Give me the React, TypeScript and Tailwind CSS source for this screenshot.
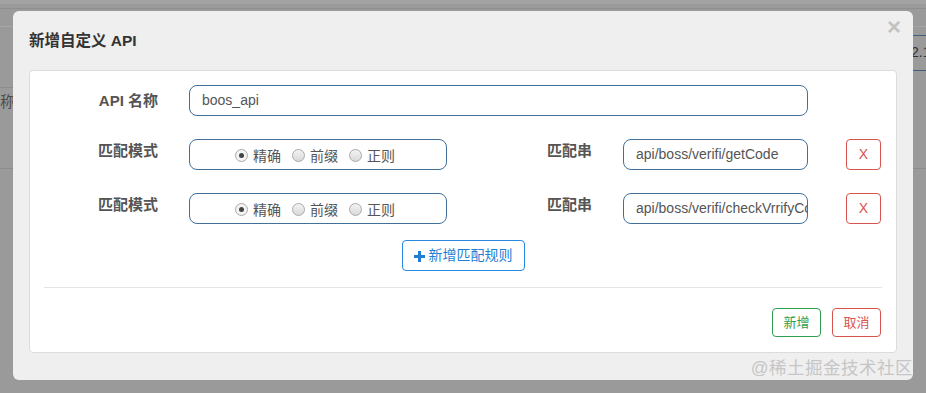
import React from 'react';

const font = "font-['Liberation_Sans','Noto_Sans_CJK_SC',sans-serif]";

function Radio({ checked, label }: { checked?: boolean; label: string }) {
  return (
    <label className="flex items-center">
      <span
        className={
          'flex h-[13px] w-[13px] items-center justify-center rounded-full border border-[#a9a9a9] ' +
          (checked ? 'bg-[#f4f4f4]' : 'bg-gradient-to-b from-[#f3f3f3] to-[#d9d9d9]')
        }
      >
        {checked && <span className="h-[5px] w-[5px] rounded-full bg-[#444]" />}
      </span>
      <span className="ml-[5px] text-[14px] leading-5 text-[#555]">{label}</span>
    </label>
  );
}

function RuleRow({ value }: { value: string }) {
  return (
    <div className="flex items-start">
      <div className="w-[114px] pt-[2px] text-right text-[15px] font-bold leading-5 text-[#555]">匹配模式</div>
      <div className="ml-[31px] flex h-[31px] w-[258px] items-center justify-center gap-[11px] rounded-[8px] border border-[#41709b] pt-[2px] pr-[6px]">
        <Radio checked label="精确" />
        <Radio label="前缀" />
        <Radio label="正则" />
      </div>
      <div className="ml-[100px] w-[45px] pt-[2px] text-[15px] font-bold leading-5 text-[#555]">匹配串</div>
      <div className="ml-[31px] flex h-[31px] w-[185px] items-center overflow-hidden whitespace-nowrap rounded-[8px] border border-[#41709b] pl-[12px] text-[14px] text-[#555]">
        {value}
      </div>
      <button className="ml-[38px] flex h-[31px] w-[35px] items-center justify-center rounded-[4px] border border-[#d9534f] text-[14px] text-[#d9534f]">
        X
      </button>
    </div>
  );
}

export default function App() {
  return (
    <div className={`relative h-[393px] w-[926px] overflow-hidden bg-[#9a9a9a] ${font}`}>
      {/* page behind the overlay */}
      <div className="absolute left-0 top-0 h-[4px] w-full bg-[#a3a3a3]" />
      <div className="absolute left-0 top-[8px] h-px w-full bg-[#8e8e8e]" />
      <div className="absolute left-0 top-[26px] h-px w-full bg-[#a6a6a6]" />
      <div className="absolute left-0 top-[87px] h-px w-[13px] bg-[#8c8c8c]" />
      <div className="absolute left-0 top-[168px] h-px w-[13px] bg-[#8c8c8c]" />
      <div className="absolute left-0 top-[92px] text-[15px] leading-5 text-[#4b4b4b]">称</div>
      <div className="absolute left-[913px] top-[35px] h-[36px] w-[13px] border-y border-[#3f5f7c]" />
      <div className="absolute left-[911px] top-[42px] text-[14px] leading-5 text-[#333]">2.1</div>
      <div className="absolute left-[913px] top-[168px] h-px w-[13px] bg-[#8c8c8c]" />

      {/* modal */}
      <div className="relative ml-[13px] mt-[11px] flex h-[369px] w-[900px] flex-col rounded-[6px] bg-[#efefef]">
        <div className="flex h-[59px] items-center justify-between pl-[16px] pr-[12px]">
          <h4 className="pt-[1px] text-[15.5px] font-bold text-[#333]">新增自定义 API</h4>
          <span className="-mt-[28px] text-[24px] font-bold leading-none text-[#c2c2c2]">×</span>
        </div>

        <div className="mx-[16px] flex h-[283px] flex-col rounded-[4px] border border-[#dcdcdc] bg-white px-[14px] pt-[14px]">
          <div className="flex items-start">
            <div className="w-[114px] pt-[6px] text-right text-[15px] font-bold leading-5 text-[#555]">API 名称</div>
            <div className="ml-[31px] flex h-[31px] w-[619px] items-center rounded-[8px] border border-[#41709b] pl-[12px] text-[14px] text-[#555]">
              boos_api
            </div>
          </div>

          <div className="mt-[23px]">
            <RuleRow value="api/boss/verifi/getCode" />
          </div>
          <div className="mt-[23px]">
            <RuleRow value="api/boss/verifi/checkVrrifyCode" />
          </div>

          <div className="mt-[16px] flex justify-center">
            <button className="flex h-[31px] w-[123px] items-center justify-center gap-[4px] rounded-[4px] border border-[#2a88e0] text-[14px] text-[#1f7fd6]">
              <svg width="11" height="11" viewBox="0 0 11 11" className="mt-[1px]">
                <path d="M4 0h3v4h4v3H7v4H4V7H0V4h4z" fill="#1f7fd6" />
              </svg>
              新增匹配规则
            </button>
          </div>

          <div className="mt-[16px] h-px bg-[#e5e5e5]" />

          <div className="mt-[20px] flex justify-end gap-[11px] pr-px">
            <button className="h-[29px] w-[49px] rounded-[4px] border border-[#2e9e4f] text-[13px] text-[#2e9e4f]">新增</button>
            <button className="h-[29px] w-[49px] rounded-[4px] border border-[#d9534f] text-[13px] text-[#d9534f]">取消</button>
          </div>
        </div>
      </div>

      {/* watermark */}
      <div className="absolute bottom-[13px] right-[13px] text-[17.5px] leading-6 tracking-[0.5px] text-[#c6c6c6]">
        @稀土掘金技术社区
      </div>
    </div>
  );
}
